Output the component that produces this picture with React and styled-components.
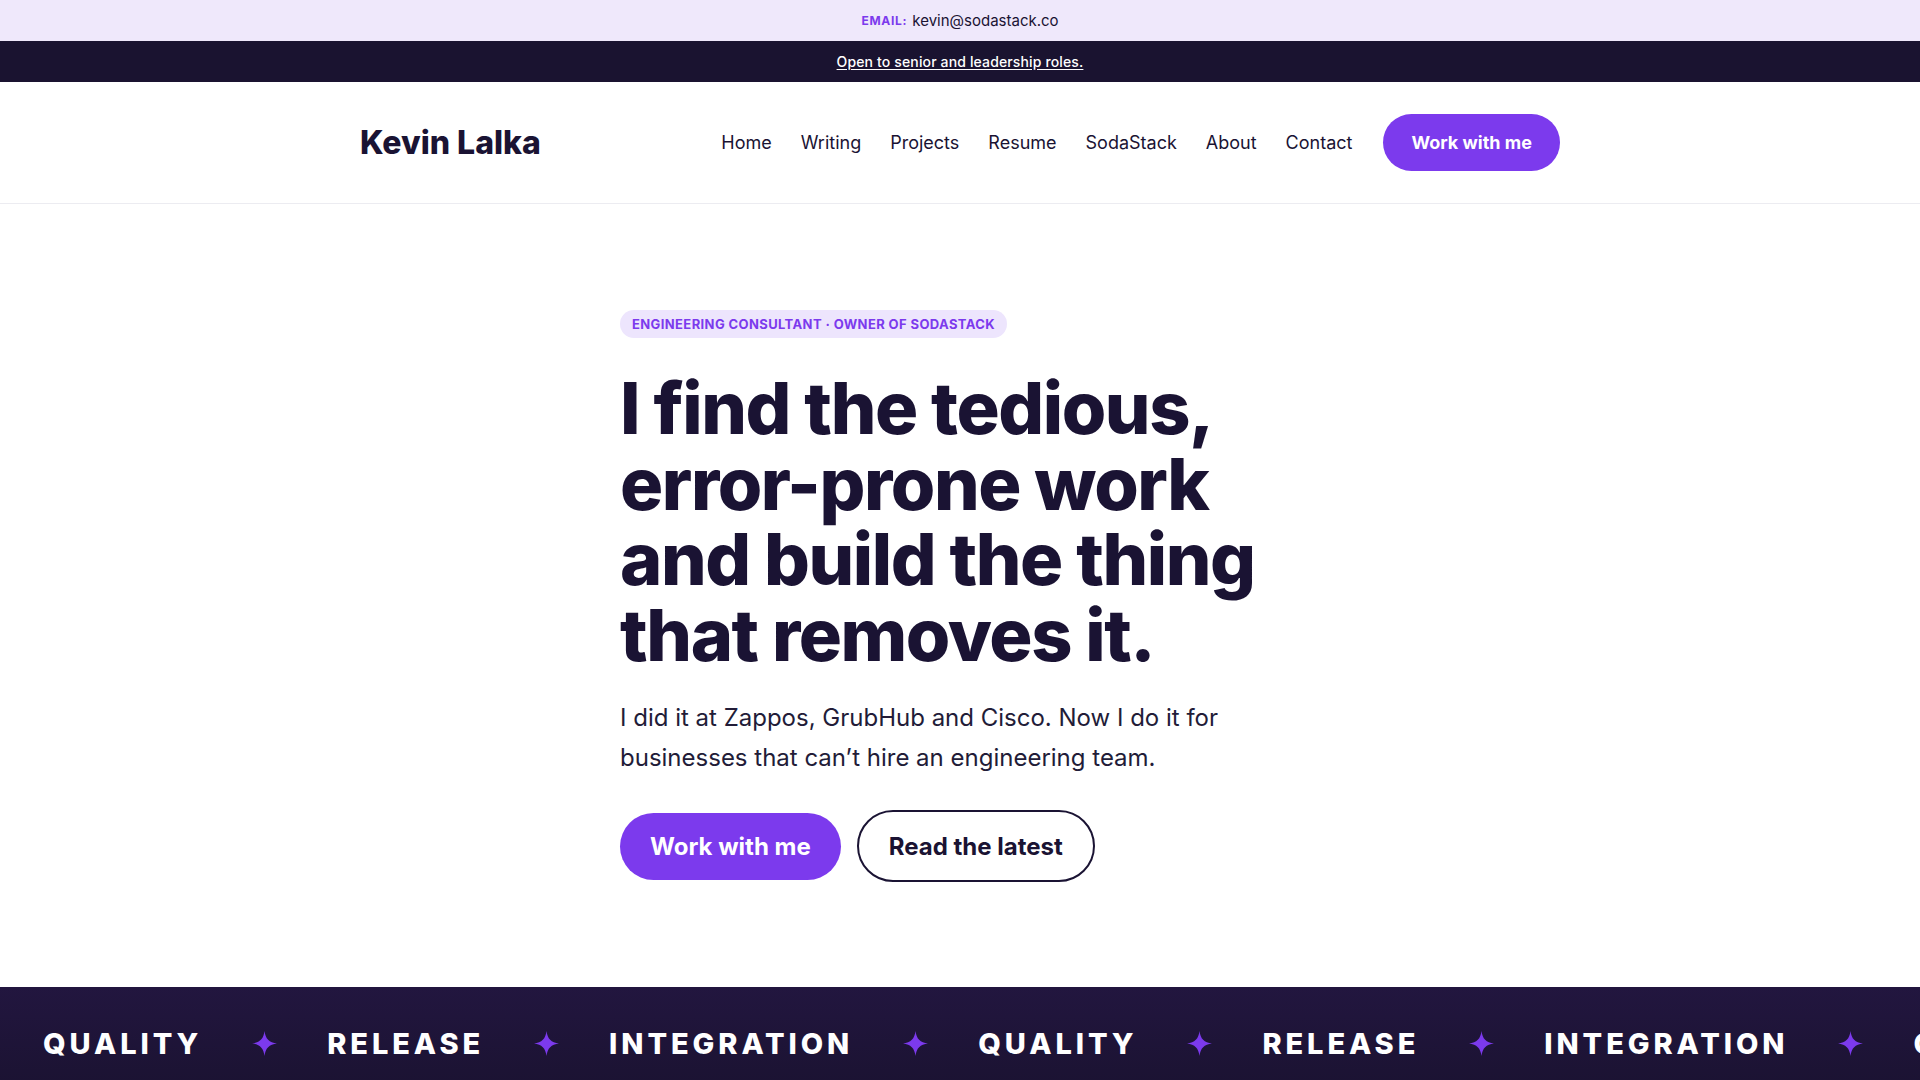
import React from 'react';
import styled, { createGlobalStyle } from 'styled-components';

const GlobalStyle = createGlobalStyle`
  * { box-sizing: border-box; }
  body {
    margin: 0;
    background: #ffffff;
    font-family: Inter, "Noto Sans", sans-serif;
    color: #1a1333;
  }
`;

const EmailBar = styled.div`
  height: 41px;
  background: #efe8fb;
  display: flex;
  align-items: center;
  justify-content: center;
  gap: 5px;
  font-size: 15px;
  color: #1a1333;
`;

const EmailLabel = styled.span`
  font-size: 12px;
  font-weight: 700;
  letter-spacing: 0.06em;
  color: #7c3aed;
`;

const NoticeBar = styled.div`
  height: 41px;
  background: #1a1330;
  display: flex;
  align-items: center;
  justify-content: center;
`;

const NoticeLink = styled.a`
  color: #ffffff;
  font-size: 14px;
  font-weight: 500;
  letter-spacing: 0.01em;
  text-decoration: underline;
  text-underline-offset: 2px;
`;

const Header = styled.header`
  border-bottom: 1px solid #ececf1;
`;

const Container = styled.div`
  width: 1200px;
  margin: 0 auto;
  display: flex;
  align-items: center;
  justify-content: space-between;
  height: 121px;
`;

const Logo = styled.a`
  font-size: 32px;
  font-weight: 800;
  letter-spacing: 0;
  color: #1a1333;
  text-decoration: none;
`;

const Nav = styled.nav`
  display: flex;
  align-items: center;
  gap: 29px;
`;

const NavLink = styled.a`
  font-size: 18px;
  color: #1a1333;
  text-decoration: none;
`;

const Button = styled.a`
  display: inline-flex;
  align-items: center;
  justify-content: center;
  border-radius: 999px;
  font-weight: 700;
  text-decoration: none;
  height: ${(p) => (p.$size === 'lg' ? (p.$outline ? '72px' : '67px') : '57px')};
  padding: 0 ${(p) => (p.$size === 'lg' ? '30px' : '28px')};
  font-size: ${(p) => (p.$size === 'lg' ? '24px' : '18px')};
  background: ${(p) => (p.$outline ? '#ffffff' : '#7c3aed')};
  color: ${(p) => (p.$outline ? '#1a1333' : '#ffffff')};
  border: ${(p) => (p.$outline ? '2px solid #1a1333' : 'none')};
`;

const NavButton = styled(Button)`
  margin-left: 2px;
`;

const Hero = styled.section`
  padding: 106px 0 105px;
`;

const HeroInner = styled.div`
  width: 680px;
  margin: 0 auto;
`;

const Badge = styled.span`
  display: inline-block;
  background: #ede5fd;
  color: #7c3aed;
  font-size: 13px;
  font-weight: 700;
  line-height: 16px;
  padding: 6px 12px;
  border-radius: 999px;
  letter-spacing: 0.03em;
`;

const Headline = styled.h1`
  margin: 32px 0 0;
  font-size: 72px;
  line-height: 1.05;
  font-weight: 800;
  letter-spacing: -0.02em;
  color: #1a1333;
`;

const Lead = styled.p`
  margin: 26px 0 0;
  font-size: 24px;
  line-height: 40px;
  color: #221c38;
`;

const Actions = styled.div`
  margin-top: 32px;
  display: flex;
  align-items: center;
  gap: 16px;
`;

const Marquee = styled.div`
  background: linear-gradient(180deg, #22163f 0%, #1a1230 100%);
  overflow: hidden;
  padding: 39px 0 40px;
`;

const Track = styled.div`
  display: flex;
  align-items: center;
  gap: 50px;
  white-space: nowrap;
  padding-left: 43px;
`;

const Word = styled.span`
  flex-shrink: 0;
  font-size: 29px;
  font-weight: 800;
  letter-spacing: 0.135em;
  color: #ffffff;
`;

const StarIcon = styled.svg`
  flex-shrink: 0;
  display: block;
`;

const Star = () => (
  <StarIcon width="25" height="25" viewBox="0 0 24 24" aria-hidden="true">
    <path
      d="M12 0 C12.9 7.5 16.5 11.1 24 12 C16.5 12.9 12.9 16.5 12 24 C11.1 16.5 7.5 12.9 0 12 C7.5 11.1 11.1 7.5 12 0 Z"
      fill="#7c3aed"
    />
  </StarIcon>
);

const words = ['QUALITY', 'RELEASE', 'INTEGRATION', 'QUALITY', 'RELEASE', 'INTEGRATION', 'QUALITY', 'RELEASE'];

const links = ['Home', 'Writing', 'Projects', 'Resume', 'SodaStack', 'About', 'Contact'];

export default function App() {
  return (
    <>
      <GlobalStyle />
      <EmailBar>
        <EmailLabel>EMAIL:</EmailLabel>
        <span>kevin@sodastack.co</span>
      </EmailBar>
      <NoticeBar>
        <NoticeLink href="#">Open to senior and leadership roles.</NoticeLink>
      </NoticeBar>
      <Header>
        <Container>
          <Logo href="#">Kevin Lalka</Logo>
          <Nav>
            {links.map((l) => (
              <NavLink key={l} href="#">{l}</NavLink>
            ))}
            <NavButton href="#">Work with me</NavButton>
          </Nav>
        </Container>
      </Header>
      <Hero>
        <HeroInner>
          <Badge>ENGINEERING CONSULTANT · OWNER OF SODASTACK</Badge>
          <Headline>
            I find the tedious,
            <br />
            error-prone work
            <br />
            and build the thing
            <br />
            that removes it.
          </Headline>
          <Lead>
            I did it at Zappos, GrubHub and Cisco. Now I do it for businesses that can’t hire an engineering team.
          </Lead>
          <Actions>
            <Button href="#" $size="lg">Work with me</Button>
            <Button href="#" $size="lg" $outline>Read the latest</Button>
          </Actions>
        </HeroInner>
      </Hero>
      <Marquee>
        <Track>
          {words.map((w, i) => (
            <React.Fragment key={i}>
              <Word>{w}</Word>
              <Star />
            </React.Fragment>
          ))}
        </Track>
      </Marquee>
    </>
  );
}
